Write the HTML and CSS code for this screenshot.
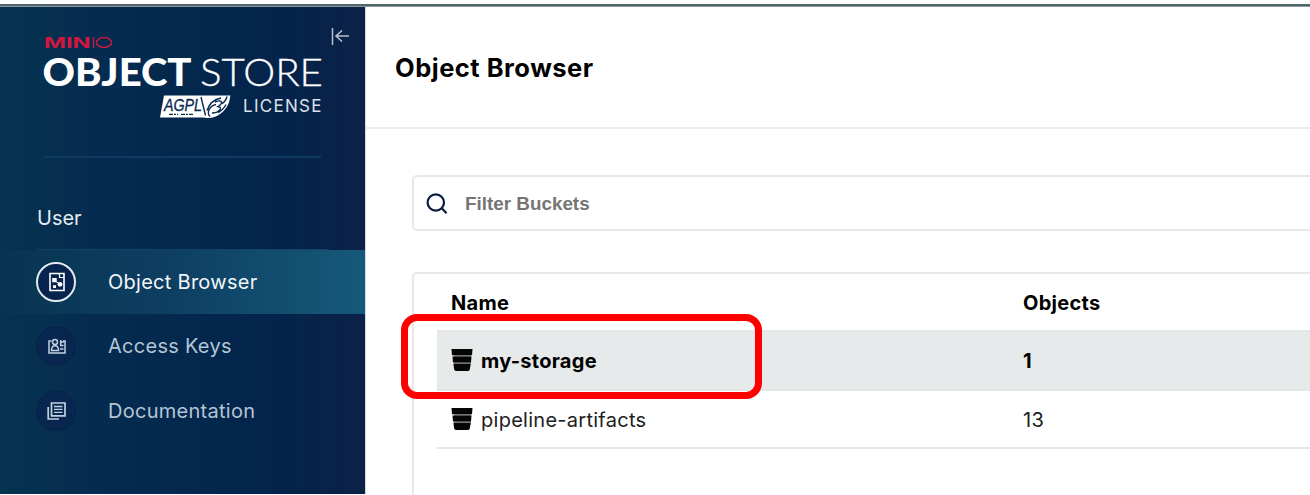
FILE: index.html
```html
<!DOCTYPE html>
<html lang="en">
<head>
<meta charset="utf-8">
<title>Object Browser</title>
<link rel="stylesheet" href="styles.css">
</head>
<body>
<div class="topbar"></div>
<div class="app">
  <aside class="sidebar">
    <div class="brand">
      <svg class="logo" width="280" height="92" viewBox="0 -1.500 280 92" role="img" aria-label="MinIO Object Store">
        <text x="1" y="18.300" fill="#d0173f" font-family="Inter, sans-serif" font-size="14.500" font-weight="700" textLength="46.500" lengthAdjust="spacingAndGlyphs">MIN</text>
        <path d="M50.500 7.600v10.800" stroke="#d0173f" stroke-width="1.300"/>
        <ellipse cx="61" cy="13" rx="7.600" ry="4.900" fill="none" stroke="#d0173f" stroke-width="1.500"/>
        <text x="-.5" y="56.500" fill="#fff" font-family="Lato, sans-serif" font-weight="900" font-size="37.500" textLength="149" lengthAdjust="spacingAndGlyphs">OBJECT</text>
        <text x="157" y="56.500" fill="#fff" stroke="#fff" stroke-width=".3" font-family="Lato, sans-serif" font-weight="300" font-size="37.500" textLength="123" lengthAdjust="spacingAndGlyphs">STORE</text>
        <path d="M121 66H187.500L186 73C182 83 173 89 164 88.500L160 88H117z" fill="#fff"/>
        <text x="121" y="81.500" fill="#092852" font-family="Liberation Sans, sans-serif" font-style="italic" font-size="16" textLength="38" stroke="#092852" stroke-width=".3" lengthAdjust="spacingAndGlyphs">AGPL</text>
        <path d="M126 84.800h9m3 0h12" stroke="#092852" stroke-width="1.300" stroke-dasharray="4 1 2 1"/>
        <path d="M158 67.500l4.500 18.500M164 81c2-6 6-11 14-12.500M167 87c-4-4 0-11 6-12M172 72.500c7-3 9 1 3 4.500 6 1 0 7-6 6.500M184 67c-1 4-3 6-5 7M183 75c-2 4-4 6-8 8" fill="none" stroke="#092852" stroke-width="1.400"/>
        <text x="200" y="82" fill="#dbe1ea" font-family="Inter, sans-serif" font-size="17" textLength="78.500" lengthAdjust="spacing">LICENSE</text>
      </svg>
      <svg class="collapse" width="19" height="20" viewBox="0 0 19 20" fill="none" stroke="#b9c2ce" stroke-width="1.500"><path d="M1.500 2v17M18 10H5M11 4.500L5 10l6 5.500"/></svg>
    </div>
    <div class="rule"></div>
    <div class="group">User</div>
    <nav>
      <a class="item active">
        <span class="badge"><svg width="16" height="20" viewBox="0 0 16 20"><path d="M1 1.500h14v17H1z" fill="none" stroke="#fff" stroke-width="1.600"/><path d="M10.500 1v4.500H15" fill="none" stroke="#fff" stroke-width="1.200"/><path d="M3.200 6h4.500v4.200H3.200zM4 13.200h3v2.800H4z" fill="#fff"/><path d="M7 9.500l3 2" stroke="#fff"/><circle cx="11" cy="12.300" r="2.400" fill="#fff"/></svg></span>
        <span>Object Browser</span>
      </a>
      <a class="item">
        <span class="badge"><svg width="18" height="16" viewBox="0 0 18 16" fill="none" stroke="#c1d1df" stroke-width="1.500"><path d="M3.500 3H1v12h16V3h-2"/><circle cx="7" cy="4" r="2.500"/><path d="M3.500 12.500c0-6.500 7-6.500 7 0zM12 4h4M12 7.500h3.500M12 11h3.500M12.700 2v6"/></svg></span>
        <span>Access Keys</span>
      </a>
      <a class="item">
        <span class="badge"><svg width="19" height="18" viewBox="0 0 19 18" fill="none" stroke="#c1d1df" stroke-width="1.700"><path d="M4.500 1H18v12.800H4.500zM1.200 5v12H12"/><path d="M7 4.500h8.500M7 7.400h8.500M7 10.300h8.500" stroke-width="1.300"/></svg></span>
        <span>Documentation</span>
      </a>
    </nav>
  </aside>
  <main class="main">
    <header class="head"><h1>Object Browser</h1></header>
    <div class="content">
      <div class="search">
        <svg width="22" height="22" viewBox="0 0 22 22" fill="none" stroke="#081c42" stroke-width="2.200"><circle cx="9.800" cy="9.500" r="8.200"/><path d="M15.800 15.300l4.700 4.900"/></svg>
        <span>Filter Buckets</span>
      </div>
      <section class="table">
        <div class="row header"><span>Name</span><span>Objects</span></div>
        <div class="row selected">
          <span class="name"><svg class="bucket" width="22" height="22" viewBox="0 0 22 22"><path d="M.5 0h21l-.5 6.300H1zM1.500 7.500h19l-.5 6H2zM2.400 14.800h17.200l-.7 5.200q-.2 2-2 2H5.100q-1.800 0-2-2z"/></svg>my-storage</span>
          <span>1</span>
          <div class="highlight"></div>
        </div>
        <div class="row">
          <span class="name"><svg class="bucket" width="22" height="22" viewBox="0 0 22 22"><path d="M.5 0h21l-.5 6.300H1zM1.500 7.500h19l-.5 6H2zM2.400 14.800h17.200l-.7 5.200q-.2 2-2 2H5.100q-1.800 0-2-2z"/></svg>pipeline-artifacts</span>
          <span>13</span>
        </div>
      </section>
    </div>
  </main>
</div>
</body>
</html>
```
FILE: styles.css
```css
* { box-sizing: border-box; }
body { margin: 0; height: 495px; overflow: hidden; background: #fff; font-family: Inter, sans-serif; font-size: 20px; letter-spacing: .27px; color: #000; }
.topbar { height: 7px; border-top: 4px solid #fdfdfd; background: #51666c; border-bottom: 1px solid #8b989d; }
.app { display: flex; height: 487px; }
.sidebar { width: 365px; flex: none; background: linear-gradient(90deg, #06334f 0%, #052b50 28%, #03264c 60%, #04244b 75%, #0c2148 100%); color: #e4eaf0; overflow: hidden; }
.brand { display: flex; height: 149px; padding: 21px 0 0 43px; }
.logo { flex: none; letter-spacing: 0; }
.collapse { margin: -2px 0 0 8px; }
.rule { height: 2px; margin: 0 44px; background: #0f3b63; }
.group { height: 93px; margin: 0 36px -1px 37px; padding-top: 48px; line-height: 24px; letter-spacing: 0; border-bottom: 2px solid #10426b; }
.item { display: flex; align-items: center; gap: 32px; height: 64.500px; padding-left: 36px; color: #b4c5d5; }
.item.active { height: 64px; color: #f2f6f9; background: linear-gradient(90deg, #073450 0%, #0d3e62 45%, #16597a 100%); }
.badge { display: flex; align-items: center; justify-content: center; width: 40px; height: 40px; border-radius: 50%; background: #08264f; border: 1px solid #082149; }
.badge svg { margin-left: 1px; }
.active .badge { border: 2px solid #e4e9ee; background: #07234f; }
.main { flex: 1; min-width: 0; border-left: 1px solid #d5dae2; }
.head { display: flex; align-items: center; height: 122px; padding: 2px 0 0 29px; border-bottom: 2px solid #ececec; }
h1 { margin: 0; font-size: 25.500px; line-height: 30px; font-weight: 700; letter-spacing: .5px; }
.content { padding: 46px 0 0 46px; }
.search { display: flex; align-items: center; gap: 17px; height: 56px; padding: 1px 0 0 12px; border: 2px solid #e8e8e8; border-right: 0; border-radius: 5px 0 0 5px; font: 700 18.850px "Liberation Sans", sans-serif; letter-spacing: 0; color: #757575; }
.table { height: 230px; margin-top: 41px; padding-left: 23px; border: 2px solid #e8e8e8; border-width: 2px 0 0 2px; border-radius: 5px 0 0 0; }
.row { position: relative; display: grid; grid-template-columns: 572px 1fr; align-items: center; height: 58.500px; padding: 2px 0 0 14px; border-bottom: 2px solid #e5e7e7; color: #202020; }
.row.header { height: 58px; font-weight: 700; color: #000; }
.row.selected { background: #e6eaeb; font-weight: 700; color: #000; }
.name { display: flex; align-items: center; gap: 8px; }
.bucket { flex: none; margin-top: -2px; fill: #050505; background: linear-gradient(#999, #999) center / 17px 12px no-repeat; }
.highlight { position: absolute; left: -36px; top: -18px; width: 361px; height: 85px; border: 7px solid #fe0000; border-radius: 16px; }
```
